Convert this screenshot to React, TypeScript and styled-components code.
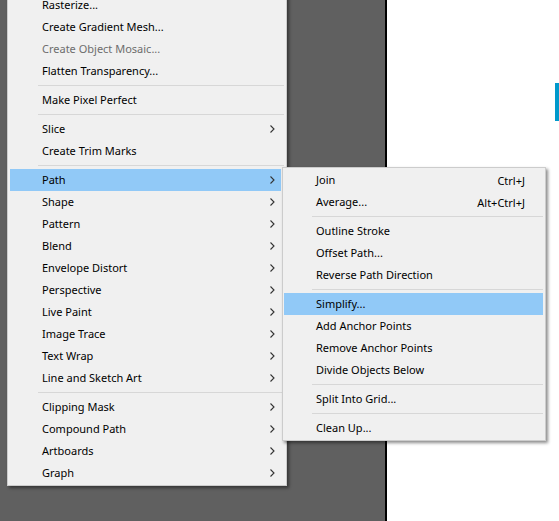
import styled, { createGlobalStyle } from 'styled-components';

type Entry =
  | { kind: 'sep' }
  | { kind: 'item'; label: string; sub?: boolean; disabled?: boolean; active?: boolean; shortcut?: string };

const sep: Entry = { kind: 'sep' };
const item = (label: string, extra: Partial<Omit<Extract<Entry, { kind: 'item' }>, 'kind' | 'label'>> = {}): Entry => ({
  kind: 'item',
  label,
  ...extra,
});

const objectMenu: Entry[] = [
  item('Rasterize...'),
  item('Create Gradient Mesh...'),
  item('Create Object Mosaic...', { disabled: true }),
  item('Flatten Transparency...'),
  sep,
  item('Make Pixel Perfect'),
  sep,
  item('Slice', { sub: true }),
  item('Create Trim Marks'),
  sep,
  item('Path', { sub: true, active: true }),
  item('Shape', { sub: true }),
  item('Pattern', { sub: true }),
  item('Blend', { sub: true }),
  item('Envelope Distort', { sub: true }),
  item('Perspective', { sub: true }),
  item('Live Paint', { sub: true }),
  item('Image Trace', { sub: true }),
  item('Text Wrap', { sub: true }),
  item('Line and Sketch Art', { sub: true }),
  sep,
  item('Clipping Mask', { sub: true }),
  item('Compound Path', { sub: true }),
  item('Artboards', { sub: true }),
  item('Graph', { sub: true }),
];

const pathMenu: Entry[] = [
  item('Join', { shortcut: 'Ctrl+J' }),
  item('Average...', { shortcut: 'Alt+Ctrl+J' }),
  sep,
  item('Outline Stroke'),
  item('Offset Path...'),
  item('Reverse Path Direction'),
  sep,
  item('Simplify...', { active: true }),
  item('Add Anchor Points'),
  item('Remove Anchor Points'),
  item('Divide Objects Below'),
  sep,
  item('Split Into Grid...'),
  sep,
  item('Clean Up...'),
];

const Chevron = () => (
  <svg width="5" height="8" viewBox="0 0 5 8">
    <path d="M0.5 0.5 L4 4 L0.5 7.5" fill="none" stroke="#333" strokeWidth="1.1" />
  </svg>
);

const MenuList = ({ entries }: { entries: Entry[] }) => (
  <>
    {entries.map((e, i) =>
      e.kind === 'sep' ? (
        <Separator key={i} />
      ) : (
        <Row key={i} $active={!!e.active} $disabled={!!e.disabled}>
          <Label>{e.label}</Label>
          {e.shortcut && <Shortcut>{e.shortcut}</Shortcut>}
          {e.sub && (
            <Arrow>
              <Chevron />
            </Arrow>
          )}
          {e.label === 'Path' && (
            <SubMenu>
              <MenuList entries={pathMenu} />
            </SubMenu>
          )}
        </Row>
      )
    )}
  </>
);

const App = () => {
  return (
    <Page>
      <GlobalStyle />
      <Workspace />
      <Divider />
      <Artboard>
        <SelectionMark />
      </Artboard>
      <ObjectMenu>
        <MenuList entries={objectMenu} />
      </ObjectMenu>
    </Page>
  );
};

const GlobalStyle = createGlobalStyle`
  body {
    margin: 0;
    background: #606060;
    font-family: "Noto Sans", "Open Sans", sans-serif;
  }
`;

const Page = styled.div`
  position: relative;
  display: flex;
  width: 559px;
  height: 521px;
  overflow: hidden;
`;

const Workspace = styled.div`
  width: 385px;
  background: #606060;
`;

const Divider = styled.div`
  width: 2px;
  background: #000;
`;

const Artboard = styled.div`
  flex: 1;
  display: flex;
  justify-content: flex-end;
  align-items: flex-start;
  padding-top: 83px;
  background: #fff;
`;

const SelectionMark = styled.div`
  width: 4px;
  height: 38px;
  background: #0099cc;
`;

const MenuBox = styled.div`
  position: absolute;
  box-sizing: border-box;
  background: #f0f0f0;
  border: 1px solid #cccccc;
  box-shadow: 2px 2px 3px rgba(0, 0, 0, 0.45);
  font-size: 11px;
  color: #000;
`;

const ObjectMenu = styled(MenuBox)`
  left: 7px;
  top: -9px;
  width: 280px;
  padding: 2px 2px 1px 2px;
`;

const SubMenu = styled(MenuBox)`
  left: 272px;
  top: -2px;
  width: 264px;
  padding: 1px 2px 1px 1px;
  z-index: 2;
  & > div {
    margin-right: 0;
  }
`;

const Row = styled.div<{ $active: boolean; $disabled: boolean }>`
  position: relative;
  display: flex;
  align-items: center;
  height: 22px;
  margin-right: 3px;
  padding: 0 6px 0 32px;
  background: ${({ $active }) => ($active ? '#91c9f7' : 'transparent')};
  color: ${({ $disabled }) => ($disabled ? '#6d6d6d' : '#000')};
  white-space: nowrap;
`;

const Label = styled.span`
  flex: 1;
  line-height: 22px;
`;

const Shortcut = styled.span`
  padding-right: 12px;
`;

const Arrow = styled.span`
  display: flex;
  align-items: center;
`;

const Separator = styled.div`
  height: 1px;
  margin: 3px 0 3px 28px;
  background: #d7d7d7;
`;

export default App;
